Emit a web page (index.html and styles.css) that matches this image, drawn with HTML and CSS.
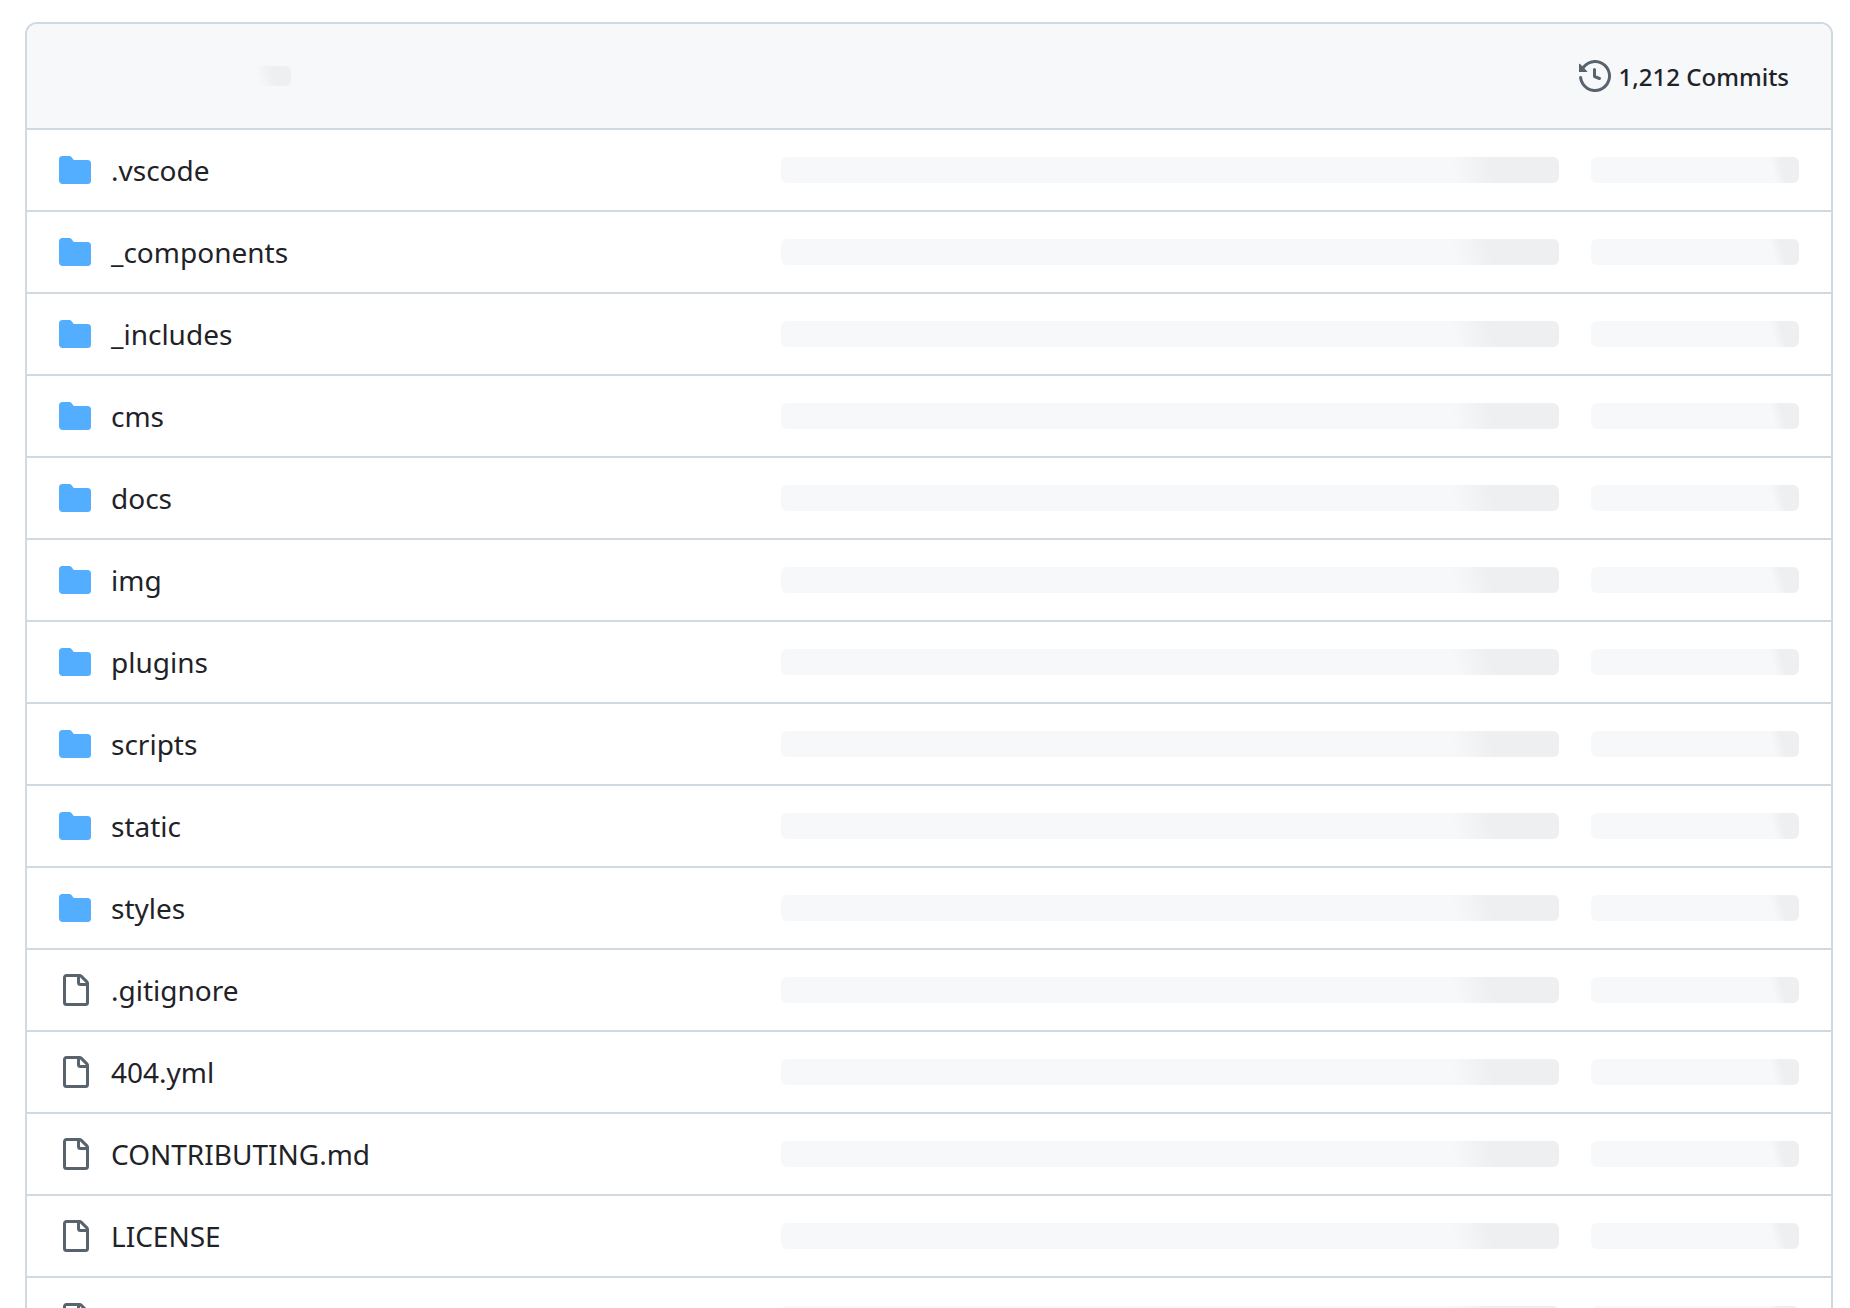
FILE: index.html
```html
<!DOCTYPE html>
<html lang="en">
<head>
    <meta charset="UTF-8">
    <title>Files</title>
    <link rel="stylesheet" href="styles.css">
</head>
<body>

<svg class="sprite" aria-hidden="true">
    <symbol id="icon-folder" viewBox="0 0 16 16">
        <path d="M1.75 1A1.75 1.75 0 0 0 0 2.75v10.5C0 14.216.784 15 1.75 15h12.5A1.75 1.75 0 0 0 16 13.25v-8.5A1.75 1.75 0 0 0 14.25 3H7.5a.25.25 0 0 1-.2-.1l-.9-1.2C6.07 1.26 5.55 1 5 1H1.75Z"/>
    </symbol>
    <symbol id="icon-file" viewBox="0 0 16 16">
        <path d="M2 1.75C2 .784 2.784 0 3.75 0h6.586c.464 0 .909.184 1.237.513l2.914 2.914c.329.328.513.773.513 1.237v9.586A1.75 1.75 0 0 1 13.25 16h-9.5A1.75 1.75 0 0 1 2 14.25Zm1.75-.25a.25.25 0 0 0-.25.25v12.5c0 .138.112.25.25.25h9.5a.25.25 0 0 0 .25-.25V6h-2.75A1.75 1.75 0 0 1 9 4.25V1.5Zm6.75.062V4.25c0 .138.112.25.25.25h2.688l-.011-.013-2.914-2.914-.013-.011Z"/>
    </symbol>
    <symbol id="icon-history" viewBox="0 0 16 16">
        <path d="m.427 1.927 1.215 1.215a8.002 8.002 0 1 1-1.6 5.685.75.75 0 1 1 1.493-.154 6.5 6.5 0 1 0 1.18-4.458l1.358 1.358A.25.25 0 0 1 3.896 6H.25A.25.25 0 0 1 0 5.75V2.104a.25.25 0 0 1 .427-.177ZM7.75 4a.75.75 0 0 1 .75.75v2.992l2.028.812a.75.75 0 0 1-.557 1.392l-2.5-1A.751.751 0 0 1 7 8.25v-3.5A.75.75 0 0 1 7.75 4Z"/>
    </symbol>
</svg>

<div class="box">
    <div class="box-header">
        <div class="skeleton skeleton-author"></div>
        <a class="commits" href="#"><svg class="icon"><use href="#icon-history"/></svg>1,212 Commits</a>
    </div>

    <table class="files">
        <colgroup>
            <col class="col-name">
            <col class="col-message">
            <col class="col-date">
        </colgroup>
        <tbody>
            <tr>
                <td><div class="name"><svg class="icon folder"><use href="#icon-folder"/></svg><a href="#">.vscode</a></div></td>
                <td><div class="skeleton"></div></td>
                <td><div class="skeleton"></div></td>
            </tr>
            <tr>
                <td><div class="name"><svg class="icon folder"><use href="#icon-folder"/></svg><a href="#">_components</a></div></td>
                <td><div class="skeleton"></div></td>
                <td><div class="skeleton"></div></td>
            </tr>
            <tr>
                <td><div class="name"><svg class="icon folder"><use href="#icon-folder"/></svg><a href="#">_includes</a></div></td>
                <td><div class="skeleton"></div></td>
                <td><div class="skeleton"></div></td>
            </tr>
            <tr>
                <td><div class="name"><svg class="icon folder"><use href="#icon-folder"/></svg><a href="#">cms</a></div></td>
                <td><div class="skeleton"></div></td>
                <td><div class="skeleton"></div></td>
            </tr>
            <tr>
                <td><div class="name"><svg class="icon folder"><use href="#icon-folder"/></svg><a href="#">docs</a></div></td>
                <td><div class="skeleton"></div></td>
                <td><div class="skeleton"></div></td>
            </tr>
            <tr>
                <td><div class="name"><svg class="icon folder"><use href="#icon-folder"/></svg><a href="#">img</a></div></td>
                <td><div class="skeleton"></div></td>
                <td><div class="skeleton"></div></td>
            </tr>
            <tr>
                <td><div class="name"><svg class="icon folder"><use href="#icon-folder"/></svg><a href="#">plugins</a></div></td>
                <td><div class="skeleton"></div></td>
                <td><div class="skeleton"></div></td>
            </tr>
            <tr>
                <td><div class="name"><svg class="icon folder"><use href="#icon-folder"/></svg><a href="#">scripts</a></div></td>
                <td><div class="skeleton"></div></td>
                <td><div class="skeleton"></div></td>
            </tr>
            <tr>
                <td><div class="name"><svg class="icon folder"><use href="#icon-folder"/></svg><a href="#">static</a></div></td>
                <td><div class="skeleton"></div></td>
                <td><div class="skeleton"></div></td>
            </tr>
            <tr>
                <td><div class="name"><svg class="icon folder"><use href="#icon-folder"/></svg><a href="#">styles</a></div></td>
                <td><div class="skeleton"></div></td>
                <td><div class="skeleton"></div></td>
            </tr>
            <tr>
                <td><div class="name"><svg class="icon"><use href="#icon-file"/></svg><a href="#">.gitignore</a></div></td>
                <td><div class="skeleton"></div></td>
                <td><div class="skeleton"></div></td>
            </tr>
            <tr>
                <td><div class="name"><svg class="icon"><use href="#icon-file"/></svg><a href="#">404.yml</a></div></td>
                <td><div class="skeleton"></div></td>
                <td><div class="skeleton"></div></td>
            </tr>
            <tr>
                <td><div class="name"><svg class="icon"><use href="#icon-file"/></svg><a href="#">CONTRIBUTING.md</a></div></td>
                <td><div class="skeleton"></div></td>
                <td><div class="skeleton"></div></td>
            </tr>
            <tr>
                <td><div class="name"><svg class="icon"><use href="#icon-file"/></svg><a href="#">LICENSE</a></div></td>
                <td><div class="skeleton"></div></td>
                <td><div class="skeleton"></div></td>
            </tr>
            <tr>
                <td><div class="name"><svg class="icon"><use href="#icon-file"/></svg></div></td>
                <td><div class="skeleton"></div></td>
                <td><div class="skeleton"></div></td>
            </tr>
        </tbody>
    </table>
</div>

</body>
</html>
```
FILE: styles.css
```css
* {
    box-sizing: border-box;
}

body {
    height: 100vh;
    margin: 0;
    padding: 22px 17px 0 25px;
    overflow: hidden;
    background: #fff;
    color: #1f2328;
    font-family: "Noto Sans", sans-serif;
    font-size: 28px;
}

a {
    color: inherit;
    text-decoration: none;
}

a:hover {
    text-decoration: underline;
}

.sprite {
    display: none;
}

.box {
    border: 2px solid #d1d9e0;
    border-radius: 12px;
    overflow: hidden;
}

.box-header {
    display: flex;
    align-items: center;
    justify-content: space-between;
    height: 106px;
    padding: 0 42px 0 64px;
    background: #f6f8fa;
    border-bottom: 2px solid #d1d9e0;
}

.commits {
    display: flex;
    align-items: center;
    gap: 8px;
    font-size: 24px;
    font-weight: 500;
}

.icon {
    flex: none;
    width: 32px;
    height: 32px;
    fill: #59636e;
}

.icon.folder {
    fill: #54aeff;
}

.files {
    width: 100%;
    table-layout: fixed;
    border-spacing: 0;
}

.col-name {
    width: 738px;
}

.col-date {
    width: 256px;
}

.files td {
    height: 82px;
    padding: 0 16px;
    border-bottom: 2px solid #d1d9e0;
}

.files td:first-child {
    padding-left: 32px;
}

.files td:last-child {
    padding-right: 32px;
}

.files tr:last-child td {
    border-bottom: 0;
}

.name {
    display: flex;
    align-items: center;
    gap: 20px;
}

/* loading bars */
.skeleton {
    height: 26px;
    border-radius: 6px;
    background: linear-gradient(75deg, #f6f8fa 86%, #eeeff1 91%);
}

.skeleton-author {
    width: 200px;
    height: 20px;
    background: linear-gradient(75deg, #f6f8fa 82%, #eeeff1 90%);
}
```
